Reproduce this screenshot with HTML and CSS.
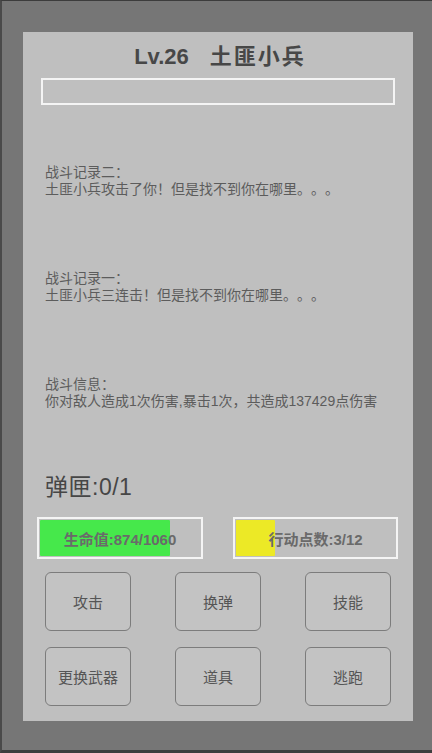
FILE: index.html
```html
<!DOCTYPE html>
<html lang="zh">
<head>
<meta charset="utf-8">
<title>战斗</title>
<link rel="stylesheet" href="styles.css">
</head>
<body>
<div class="screen">
  <div class="panel">
    <div class="title"><span class="lv">Lv.26</span><span class="name">土匪小兵</span></div>
    <div class="enemy-bar"></div>
    <div class="logs">
      <div class="log">战斗记录二：<br>土匪小兵攻击了你！但是找不到你在哪里。。。</div>
      <div class="log">战斗记录一：<br>土匪小兵三连击！但是找不到你在哪里。。。</div>
      <div class="log">战斗信息：<br>你对敌人造成1次伤害,暴击1次，共造成137429点伤害</div>
    </div>
    <div class="ammo">弹匣:0/1</div>
    <div class="stats">
      <div class="stat hp"><div class="fill" style="width:80%"></div><span class="label">生命值:874/1060</span></div>
      <div class="stat ap"><div class="fill" style="width:24%"></div><span class="label">行动点数:3/12</span></div>
    </div>
    <div class="actions">
      <div class="btn">攻击</div>
      <div class="btn">换弹</div>
      <div class="btn">技能</div>
      <div class="btn">更换武器</div>
      <div class="btn">道具</div>
      <div class="btn">逃跑</div>
    </div>
  </div>
</div>
</body>
</html>
```
FILE: styles.css
```css
* { box-sizing: border-box; }
html, body { margin: 0; padding: 0; }
body {
  width: 432px;
  height: 753px;
  background: #767676;
  font-family: "Liberation Sans", "Noto Sans CJK SC", sans-serif;
  text-spacing-trim: space-all;
  overflow: hidden;
}
.screen {
  width: 432px;
  height: 753px;
  border-top: 1px solid #3c3c3c;
  border-left: 2px solid #4a4a4a;
  border-bottom: 3px solid #3e3e3e;
  padding: 31px 19px 0 21px;
}
.panel {
  height: 689px;
  background: #bfbfbf;
  padding: 12px 0 15px;
  display: flex;
  flex-direction: column;
}
.title {
  height: 26px;
  line-height: 26px;
  text-align: center;
  white-space: nowrap;
  font-size: 22px;
  font-weight: bold;
  color: #474747;
  padding-left: 2px;
}
.title .name {
  margin-left: 21px;
  letter-spacing: 2px;
  margin-right: -2px;
}
.enemy-bar {
  margin: 8px 18px 0;
  height: 27px;
  border: 2px solid #f4f4f4;
}
.logs {
  margin-top: 59px;
  padding-left: 22px;
  display: flex;
  flex-direction: column;
  gap: 72px;
}
.log {
  font-size: 14px;
  line-height: 17px;
  height: 34px;
  color: #5c5c5c;
  white-space: nowrap;
}
.ammo {
  margin-top: 62px;
  padding-left: 22px;
  height: 30px;
  line-height: 30px;
  font-size: 23px;
  color: #464646;
  letter-spacing: 0.5px;
}
.stats {
  margin-top: 15px;
  padding-left: 14px;
  display: flex;
  gap: 30px;
}
.stat {
  position: relative;
  height: 42px;
  border: 2px solid #f4f4f4;
  padding: 1px;
  display: flex;
  align-items: center;
  justify-content: center;
}
.stat.hp { width: 166px; }
.stat.ap { width: 165px; }
.stat .fill {
  position: absolute;
  left: 1px;
  top: 1px;
  bottom: 1px;
  border-radius: 1px;
}
.stat.hp .fill { background: #46e84b; }
.stat.ap .fill { background: #ece926; }
.stat .label {
  position: relative;
  font-size: 15px;
  font-weight: bold;
  color: #6a6a6a;
}
.actions {
  margin-top: 13px;
  padding-left: 22px;
  display: grid;
  grid-template-columns: repeat(3, 86px);
  grid-auto-rows: 59px;
  column-gap: 44px;
  row-gap: 16px;
}
.btn {
  border: 1px solid #7c7c7c;
  border-radius: 6px;
  background: #c3c3c3;
  display: flex;
  align-items: center;
  justify-content: center;
  font-size: 15px;
  color: #555;
}
```
